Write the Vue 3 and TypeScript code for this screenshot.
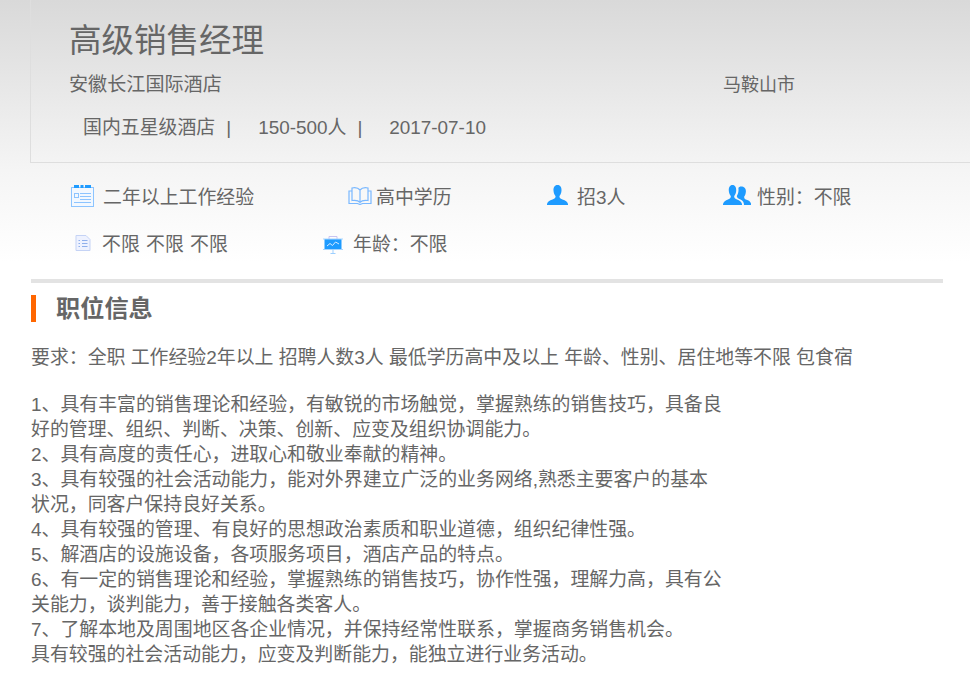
<script setup lang="ts">
const lines: string[] = [
  '1、具有丰富的销售理论和经验，有敏锐的市场触觉，掌握熟练的销售技巧，具备良',
  '好的管理、组织、判断、决策、创新、应变及组织协调能力。',
  '2、具有高度的责任心，进取心和敬业奉献的精神。',
  '3、具有较强的社会活动能力，能对外界建立广泛的业务网络,熟悉主要客户的基本',
  '状况，同客户保持良好关系。',
  '4、具有较强的管理、有良好的思想政治素质和职业道德，组织纪律性强。',
  '5、解酒店的设施设备，各项服务项目，酒店产品的特点。',
  '6、有一定的销售理论和经验，掌握熟练的销售技巧，协作性强，理解力高，具有公',
  '关能力，谈判能力，善于接触各类客人。',
  '7、了解本地及周围地区各企业情况，并保持经常性联系，掌握商务销售机会。',
  '具有较强的社会活动能力，应变及判断能力，能独立进行业务活动。',
]
</script>

<template>
  <div class="page">
    <div class="top">
      <header class="head">
        <h1 class="title">高级销售经理</h1>
        <div class="company-row">
          <span class="company">安徽长江国际酒店</span>
          <span class="city">马鞍山市</span>
        </div>
        <div class="meta">
          <span>国内五星级酒店</span><span class="sep">|</span>
          <span>150-500人</span><span class="sep">|</span>
          <span>2017-07-10</span>
        </div>
      </header>

      <div class="facts">
        <div class="fact w1">
          <svg class="ic i1" width="23" height="22" viewBox="0 0 23 22">
            <rect x="0.500" y="2.500" width="22" height="19" fill="#f2f8ff" stroke="#8cc4ff" stroke-width="1" />
            <path d="M3 0h5v3H3zM9.500 0h3v3h-3zM14 0h6v3h-6z" fill="#1e9bff" />
            <rect x="3.500" y="8.500" width="4" height="4" fill="none" stroke="#8cc4ff" />
            <path d="M9 8.500h11M9 11.500h11M9 14.500h11M3 17.500h17" stroke="#8cc4ff" stroke-width="1" />
          </svg>
          <span>二年以上工作经验</span>
        </div>
        <div class="fact w2">
          <svg class="ic i2" width="24" height="18" viewBox="0 0 24 18">
            <path d="M12 3C10.500 1.200 7.500 .3 4 1V13.500C7.500 13 10.500 13.500 12 15.500C13.500 13.500 16.500 13 20 13.500V1C16.500 .3 13.500 1.200 12 3ZM12 3V15.500" fill="none" stroke="#79b8ff" stroke-width="1.200" />
            <path d="M4 4H1V16.500H9.500L12 17.500L14.500 16.500H23V4H20" fill="none" stroke="#79b8ff" stroke-width="1.200" />
          </svg>
          <span>高中学历</span>
        </div>
        <div class="fact w3">
          <svg class="ic i3" width="21" height="20" viewBox="0 0 21 20">
            <path d="M10.500 0C7.500 0 6.300 2.500 6.500 5.500C6.600 8 7.500 10 8.500 11C8.800 12.500 8 13.500 5.500 14.500C2.500 15.500 .5 16.500 0 19V20H21V19C20.500 16.500 18.500 15.500 15.500 14.500C13 13.500 12.200 12.500 12.500 11C13.500 10 14.400 8 14.500 5.500C14.700 2.500 13.500 0 10.500 0Z" fill="#1e9bff" />
          </svg>
          <span>招3人</span>
        </div>
        <div class="fact w4">
          <svg class="ic i4" width="28" height="21" viewBox="0 0 28 21">
            <path d="M9.500 0C6.800 0 5.600 2.500 5.800 5.500C5.900 8 6.800 10 7.800 11C8 12.500 7.300 13.500 5 14.500C2.500 15.500 .5 16.500 0 19V20H19V19C18.500 16.500 16.500 15.500 14 14.500C11.700 13.500 11 12.500 11.200 11C12.200 10 13.100 8 13.200 5.500C13.400 2.500 12.200 0 9.500 0Z" fill="#1e9bff" />
            <path d="M18 1.500C16.800 1.500 16 2 15.400 3C15.800 5.500 15.400 8.500 13.800 11C13.800 12.500 15 13.500 17.500 14.500C20 15.500 21 17.500 21 20H28V18.500C27.500 16.500 25.500 15.500 23.500 14.800C21.500 14 21 13 21.200 11.500C22.300 10.500 22.800 8.500 22.900 6.300C23 3.500 21 1.500 18 1.500Z" fill="#1e9bff" />
          </svg>
          <span>性别：不限</span>
        </div>
      </div>

      <div class="facts second">
        <div class="fact w5">
          <svg class="ic i5" width="16" height="16" viewBox="0 0 16 16">
            <path d="M1 .5H11L15 4.500V15.500H1Z" fill="#eef2ff" stroke="#c5d3f5" stroke-width="1" />
            <path d="M3.500 5.500H5M7 5.500H12.500M3.500 8.500H5M7 8.500H12.500M3.500 11.500H5M7 11.500H12.500" stroke="#8fb0ec" stroke-width="1" />
          </svg>
          <span class="limits">不限 不限 不限</span>
        </div>
        <div class="fact w6">
          <svg class="ic i6" width="20" height="18" viewBox="0 0 20 18">
            <path d="M6 3V.5H14V3" fill="none" stroke="#c9c4f2" stroke-width="1" />
            <rect x="1.500" y="3" width="17" height="10" fill="#1e9bff" />
            <path d="M0 3H20M0 13.500H20" stroke="#a7d5ff" stroke-width="1" />
            <path d="M4 10L7 7.500L9.500 9.500L12.500 6L16 8" fill="none" stroke="#d8ecff" stroke-width="1" />
            <path d="M10 13.500V17M7.500 17.500H12.500" stroke="#9dcfff" stroke-width="1" />
          </svg>
          <span>年龄：不限</span>
        </div>
      </div>
    </div>

    <main class="info">
      <h2 class="section">职位信息</h2>
      <p class="req">要求：全职 工作经验2年以上 招聘人数3人 最低学历高中及以上 年龄、性别、居住地等不限 包食宿</p>
      <div class="desc">
        <div v-for="(line, i) in lines" :key="i">{{ line }}</div>
      </div>
    </main>
  </div>
</template>

<style>
html, body { margin: 0; background: #fff; }
</style>

<style scoped>
.page {
  width: 970px;
  height: 687px;
  overflow: hidden;
  color: #666;
  font-family: "Liberation Sans", "Noto Sans CJK SC", sans-serif;
  font-size: 18.9px;
}
.top {
  height: 279px;
  box-sizing: border-box;
  background: linear-gradient(#d9d9d9 0, #f5f5f5 170px, #fff 262px);
}
.head {
  margin-left: 30px;
  height: 163px;
  box-sizing: border-box;
  padding: 19px 0 0 38px;
  border-left: 1px solid #dedede;
  border-bottom: 1px solid #dedede;
}
.title {
  margin: 0;
  font-size: 32.5px;
  font-weight: 400;
  line-height: 44px;
}
.company-row { display: flex; margin-top: 9px; line-height: 26px; }
.company { width: 654px; font-size: 19.1px; }
.city { font-size: 18px; }
.meta { margin-top: 17px; padding-left: 14px; line-height: 26px; display: flex; }
.sep { margin: 0 27px 0 11px; }
.facts { display: flex; padding-left: 71px; margin-top: 20px; height: 30px; }
.second { margin-top: 17px; }
.fact { display: flex; align-items: center; line-height: 30px; flex: none; }
.ic { flex: none; }
.w1 { width: 277px; }
.w2 { width: 199px; }
.w3 { width: 176px; }
.i1 { margin-right: 9px; margin-bottom: 4px; }
.i2 { margin-right: 4px; margin-bottom: 4px; }
.i3 { margin-right: 9px; margin-bottom: 6px; }
.i4 { margin-right: 6px; margin-bottom: 5px; }
.w5 { width: 252px; padding-left: 4px; box-sizing: border-box; }
.i5 { margin-right: 11px; margin-bottom: 4px; }
.i6 { margin-right: 10px; margin-bottom: 1px; }
.limits { word-spacing: 1px; }
.info { margin: 0 27px 0 31px; border-top: 4px solid #e3e3e3; }
.section {
  margin: 12px 0 0;
  height: 27px;
  border-left: 5px solid #ff6600;
  padding-left: 20px;
  font-size: 24.2px;
  font-weight: 700;
  line-height: 27px;
}
.req { margin: 23px 0 0; line-height: 26px; }
.desc { margin-top: 21px; line-height: 25px; }
</style>
